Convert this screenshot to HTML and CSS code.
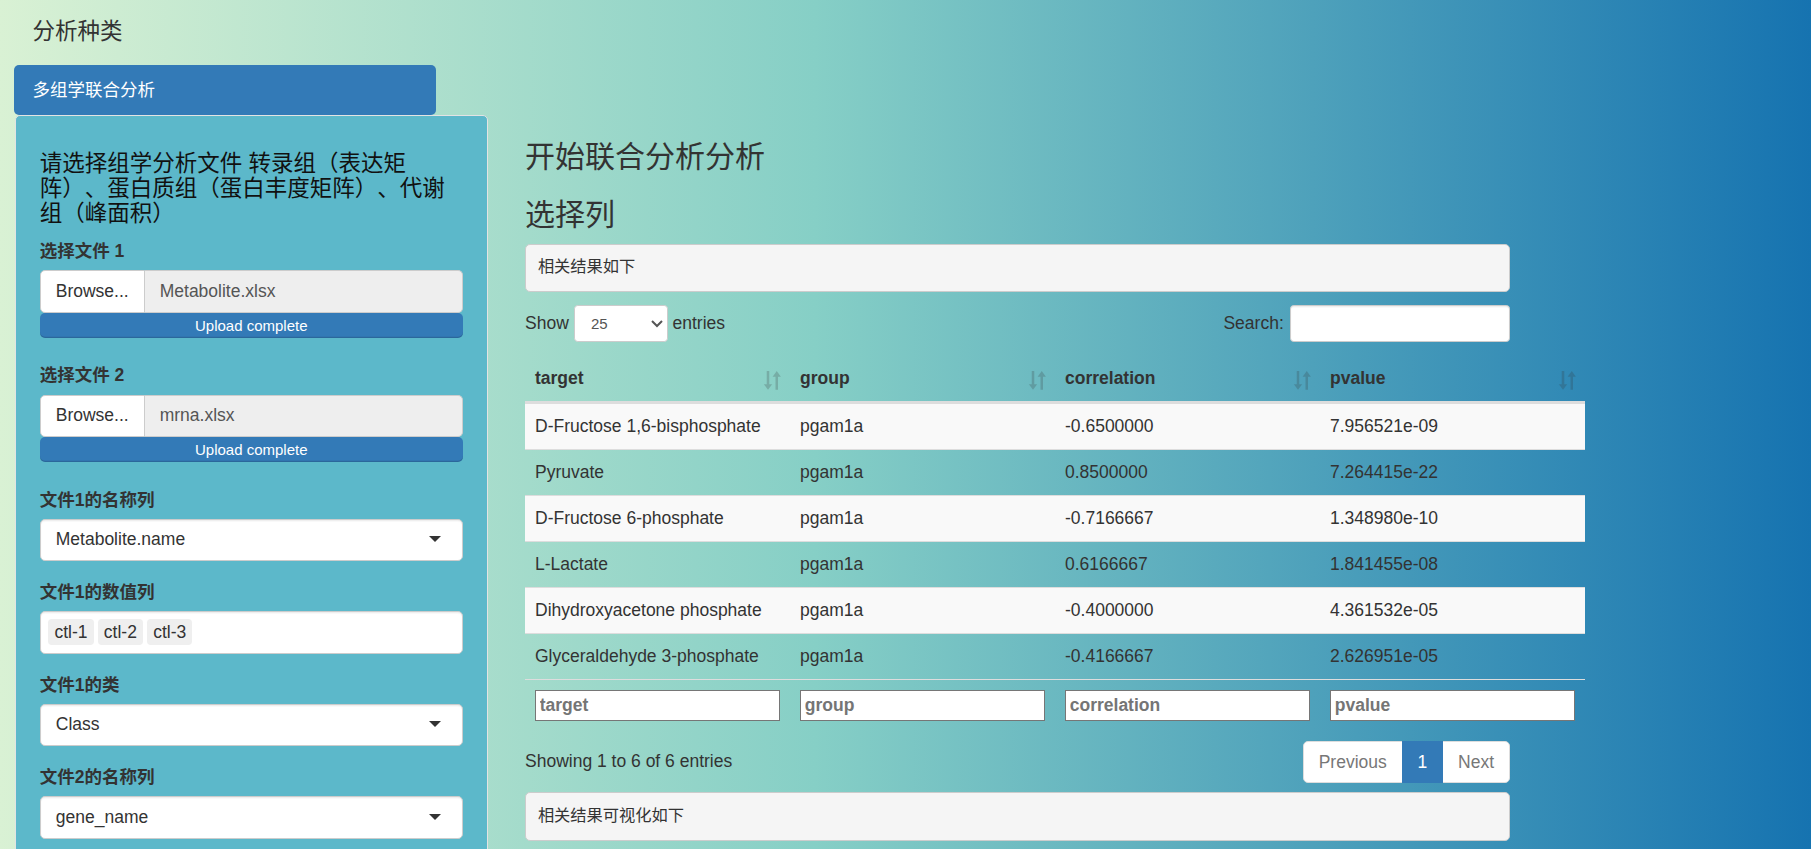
FILE: index.html
```html
<!DOCTYPE html>
<html lang="zh">
<head>
<meta charset="utf-8">
<title>多组学联合分析</title>
<link rel="stylesheet" href="styles.css">
</head>
<body>
<div class="page">
  <ul class="nav">
    <li class="nav-brand">分析种类</li>
    <li class="nav-item active"><a>多组学联合分析</a></li>
  </ul>
  <div class="layout">
    <aside class="sidebar">
      <h4 class="side-title">请选择组学分析文件 转录组（表达矩阵）、蛋白质组（蛋白丰度矩阵）、代谢组（峰面积）</h4>

      <div class="fg fg-file">
        <label class="lbl">选择文件 1</label>
        <div class="file-group">
          <span class="browse">Browse...</span>
          <span class="file-name">Metabolite.xlsx</span>
        </div>
        <div class="progress">Upload complete</div>
      </div>

      <div class="fg fg-file">
        <label class="lbl">选择文件 2</label>
        <div class="file-group">
          <span class="browse">Browse...</span>
          <span class="file-name">mrna.xlsx</span>
        </div>
        <div class="progress">Upload complete</div>
      </div>

      <div class="fg">
        <label class="lbl">文件1的名称列</label>
        <div class="sel single">Metabolite.name</div>
      </div>

      <div class="fg">
        <label class="lbl">文件1的数值列</label>
        <div class="sel multi">
          <span class="chip">ctl-1</span><span class="chip">ctl-2</span><span class="chip">ctl-3</span>
        </div>
      </div>

      <div class="fg">
        <label class="lbl">文件1的类</label>
        <div class="sel single">Class</div>
      </div>

      <div class="fg">
        <label class="lbl">文件2的名称列</label>
        <div class="sel single">gene_name</div>
      </div>
    </aside>

    <main class="main">
      <h3 class="main-title">开始联合分析分析</h3>
      <h3 class="main-title">选择列</h3>
      <pre class="out">相关结果如下</pre>

      <div class="dt">
        <div class="dt-top">
          <label class="dt-length">Show
            <select class="len-select"><option>25</option></select>
            entries</label>
          <label class="dt-filter">Search: <input class="search-input" type="search"></label>
        </div>

        <table class="dtable">
          <thead>
            <tr>
              <th>target<svg class="sort" viewBox="0 0 15 15"><path d="M3 0h2v10.5h2.3L4 15 0.7 10.5H3z"/><path d="M10 15h2V4.5h2.3L11 0 7.7 4.5H10z"/></svg></th>
              <th>group<svg class="sort" viewBox="0 0 15 15"><path d="M3 0h2v10.5h2.3L4 15 0.7 10.5H3z"/><path d="M10 15h2V4.5h2.3L11 0 7.7 4.5H10z"/></svg></th>
              <th>correlation<svg class="sort" viewBox="0 0 15 15"><path d="M3 0h2v10.5h2.3L4 15 0.7 10.5H3z"/><path d="M10 15h2V4.5h2.3L11 0 7.7 4.5H10z"/></svg></th>
              <th>pvalue<svg class="sort" viewBox="0 0 15 15"><path d="M3 0h2v10.5h2.3L4 15 0.7 10.5H3z"/><path d="M10 15h2V4.5h2.3L11 0 7.7 4.5H10z"/></svg></th>
            </tr>
          </thead>
          <tbody>
            <tr><td>D-Fructose 1,6-bisphosphate</td><td>pgam1a</td><td>-0.6500000</td><td>7.956521e-09</td></tr>
            <tr><td>Pyruvate</td><td>pgam1a</td><td>0.8500000</td><td>7.264415e-22</td></tr>
            <tr><td>D-Fructose 6-phosphate</td><td>pgam1a</td><td>-0.7166667</td><td>1.348980e-10</td></tr>
            <tr><td>L-Lactate</td><td>pgam1a</td><td>0.6166667</td><td>1.841455e-08</td></tr>
            <tr><td>Dihydroxyacetone phosphate</td><td>pgam1a</td><td>-0.4000000</td><td>4.361532e-05</td></tr>
            <tr><td>Glyceraldehyde 3-phosphate</td><td>pgam1a</td><td>-0.4166667</td><td>2.626951e-05</td></tr>
          </tbody>
          <tfoot>
            <tr>
              <th><input class="col-filter" type="text" placeholder="target"></th>
              <th><input class="col-filter" type="text" placeholder="group"></th>
              <th><input class="col-filter" type="text" placeholder="correlation"></th>
              <th><input class="col-filter" type="text" placeholder="pvalue"></th>
            </tr>
          </tfoot>
        </table>

        <div class="dt-bottom">
          <div class="dt-info">Showing 1 to 6 of 6 entries</div>
          <ul class="pagination">
            <li class="pg disabled">Previous</li>
            <li class="pg active">1</li>
            <li class="pg disabled">Next</li>
          </ul>
        </div>
      </div>

      <pre class="out out-2">相关结果可视化如下</pre>
    </main>
  </div>
</div>
</body>
</html>
```

FILE: styles.css
```css
html {
  zoom: 1.25;
  overflow: hidden;
  min-height: 100%;
  background: linear-gradient(to right, #d9f1d4 0%, #86cfc6 45%, #1673b0 100%);
}

body {
  margin: 0;
  overflow: hidden;
  font-family: "Liberation Sans", "Noto Sans CJK SC", sans-serif;
  font-size: 14px;
  line-height: 1.42857;
  color: #333;
  text-spacing-trim: space-all;
}

.page {
  padding-left: 11px;
}

/* nav list */
.nav {
  list-style: none;
  margin: 0;
  padding: 0;
  width: 338px;
}

.nav-brand {
  height: 50px;
  box-sizing: border-box;
  padding: 15px;
  font-size: 18px;
  line-height: 20px;
  color: #333;
}

.nav-item {
  margin-top: 2px;
}

.nav-item a {
  display: block;
  padding: 10px 15px;
  border-radius: 4px;
  line-height: 20px;
}

.nav-item.active a {
  background: #337ab7;
  color: #fff;
}

/* layout */
.layout {
  display: flex;
  align-items: flex-start;
  gap: 30px;
  margin-left: 1px;
}

.sidebar {
  width: 378px;
  flex: none;
  box-sizing: border-box;
  padding: 19px;
  background: #5cb8ca;
  border: 1px solid #e3e3e3;
  border-radius: 4px;
  min-height: 700px;
}

.side-title {
  margin: 10px 12px 10px 0;
  font-size: 18px;
  line-height: 1.1;
  font-weight: 400;
  color: #111;
  text-spacing-trim: space-all;
}

.fg {
  margin-bottom: 15px;
}

.fg-file {
  margin-bottom: 20.5px;
}

.lbl {
  display: inline-block;
  margin-bottom: 5px;
  font-weight: 700;
  color: #333;
}

.file-group {
  display: flex;
  height: 34px;
  box-sizing: border-box;
}

.browse {
  box-sizing: border-box;
  padding: 6px 12px;
  border: 1px solid #ccc;
  border-radius: 4px 0 0 4px;
  background: #fff;
  color: #333;
  line-height: 20px;
}

.file-name {
  flex: 1;
  box-sizing: border-box;
  padding: 6px 12px;
  border: 1px solid #ccc;
  border-left: 0;
  border-radius: 0 4px 4px 0;
  background: #eee;
  color: #555;
  line-height: 20px;
}

.progress {
  height: 20px;
  margin-bottom: 0;
  border-radius: 4px;
  background: #337ab7;
  color: #fff;
  font-size: 12px;
  line-height: 20px;
  text-align: center;
  box-shadow: inset 0 -1px 0 rgba(0, 0, 0, 0.15);
}

.sel {
  position: relative;
  height: 34px;
  box-sizing: border-box;
  border: 1px solid #ccc;
  border-radius: 4px;
  background: #fff;
  box-shadow: inset 0 1px 1px rgba(0, 0, 0, 0.075);
  color: #333;
}

.sel.single {
  padding: 6px 12px;
  line-height: 20px;
}

.sel.single::after {
  content: "";
  position: absolute;
  top: 50%;
  right: 17px;
  margin-top: -3px;
  border-style: solid;
  border-width: 5px 5px 0 5px;
  border-color: #333 transparent transparent transparent;
}

.sel.multi {
  padding: 5px 6px;
  display: flex;
  gap: 3px;
}

.chip {
  display: inline-block;
  height: 21px;
  padding: 0 5px;
  line-height: 21px;
  background: #efefef;
  border-radius: 3px;
  color: #333;
}

/* main */
.main {
  width: 788px;
  flex: none;
}

.main-title {
  margin: 20px 0 10px;
  font-size: 24px;
  line-height: 1.1;
  font-weight: 400;
  color: #333;
}

.out {
  margin: 0 0 10px;
  padding: 9.5px;
  font-family: "Liberation Mono", "Noto Sans CJK SC", monospace;
  font-size: 13px;
  line-height: 1.42857;
  color: #333;
  background: #f5f5f5;
  border: 1px solid #ccc;
  border-radius: 4px;
}

.out-2 {
  margin-top: 5px;
}

.dt-top {
  display: flex;
  justify-content: space-between;
  align-items: flex-start;
  height: 35px;
}

.dt-length,
.dt-filter {
  display: flex;
  align-items: center;
  gap: 4px;
  font-weight: 400;
  white-space: nowrap;
}

.dt-filter {
  gap: 5px;
}

.len-select {
  width: 75px;
  height: 30px;
  padding: 5px 9px;
  font-family: "Liberation Sans", sans-serif;
  font-size: 12px;
  color: #555;
  background: #fff;
  border: 1px solid #ccc;
  border-radius: 3px;
}

.search-input {
  width: 176px;
  height: 30px;
  box-sizing: border-box;
  padding: 5px 10px;
  font-size: 12px;
  background: #fff;
  border: 1px solid #ccc;
  border-radius: 3px;
  box-shadow: inset 0 1px 1px rgba(0, 0, 0, 0.075);
}

.dtable {
  width: 848px;
  table-layout: fixed;
  border-collapse: separate;
  border-spacing: 0;
  margin: 6px 0;
}

.dtable thead th {
  position: relative;
  text-align: left;
  padding: 8px 30px 8px 8px;
  line-height: 20px;
  font-weight: 700;
  border-bottom: 2px solid #ddd;
}

.sort {
  position: absolute;
  right: 7px;
  bottom: 9px;
  width: 15px;
  height: 15px;
  fill: #333;
  opacity: 0.22;
}

.dtable tbody td {
  padding: 8px;
  line-height: 20px;
  border-top: 1px solid #ddd;
  white-space: nowrap;
}

.dtable tbody tr:nth-child(odd) td {
  background: #f9f9f9;
}

.dtable tfoot th {
  padding: 8px;
  border-top: 1px solid #ddd;
  text-align: left;
}

.col-filter {
  display: block;
  width: 100%;
  height: 25px;
  box-sizing: border-box;
  margin: 0;
  padding: 1px 3px;
  font-family: "Liberation Sans", sans-serif;
  font-size: 14px;
  font-weight: 700;
  border: 1px solid #767676;
  border-radius: 0;
  background: #fff;
}

.col-filter::placeholder {
  color: #757575;
}

.dt-bottom {
  display: flex;
  justify-content: space-between;
  align-items: flex-start;
}

.dt-info {
  padding-top: 8px;
  white-space: nowrap;
}

.pagination {
  display: flex;
  list-style: none;
  margin: 2px 0;
  padding: 0;
}

.pg {
  padding: 6px 12px;
  line-height: 20px;
  border: 1px solid #ddd;
  margin-left: -1px;
  background: #fff;
  color: #777;
}

.pg:first-child {
  margin-left: 0;
  border-radius: 4px 0 0 4px;
}

.pg:last-child {
  border-radius: 0 4px 4px 0;
}

.pg.active {
  position: relative;
  background: #337ab7;
  border-color: #337ab7;
  color: #fff;
}
```
